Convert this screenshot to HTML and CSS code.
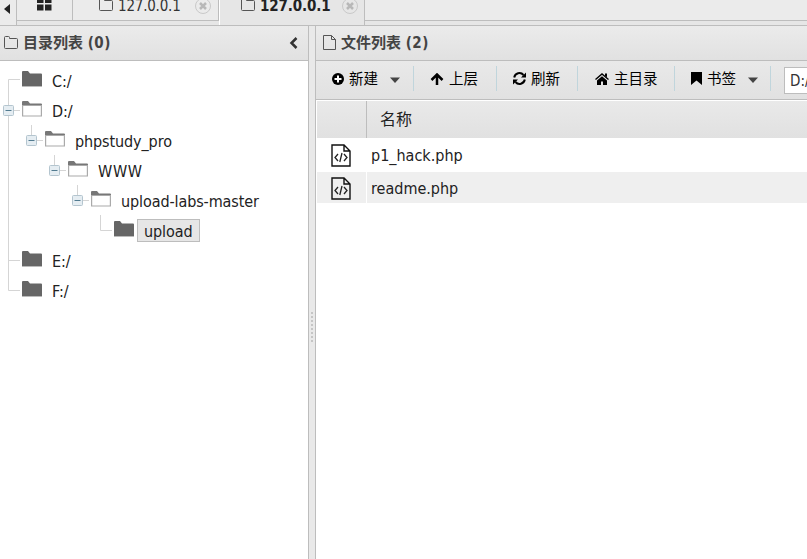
FILE: index.html
```
<!DOCTYPE html>
<html lang="zh">
<head>
<meta charset="utf-8">
<title>127.0.0.1</title>
<link rel="stylesheet" href="styles.css">
</head>
<body>
<svg class="defs" width="0" height="0">
  <symbol id="closed" viewBox="0 0 20 16"><path d="M0 1q0-1 1-1h5l2 2.500h11q1 0 1 1V15H0z" fill="#666"/><path d="M0 15.500h20" stroke="#bbb"/></symbol>
  <symbol id="open" viewBox="0 0 20 16"><path d="M0 4V1q0-1 1-1h5l2 2.500h11q1 0 1 1V4z" fill="#777"/><path d="M.6 4.500h18.800V15H.6z" fill="#fff" stroke="#aaa" stroke-width="1.200"/></symbol>
  <symbol id="folder" viewBox="0 0 14 13"><path d="M.5 1.500q0-1 1-1h3q1 0 1 1v1h7q1 0 1 1v8q0 1-1 1h-11q-1 0-1-1z" fill="none" stroke="#555"/></symbol>
  <symbol id="minus" viewBox="0 0 22 30"><path d="M14 15.500h6" stroke="#d5d5d5"/><rect x="3.500" y="10.500" width="10" height="10" rx="1" fill="#e5edf2" stroke="#b4c5cf"/><path d="M5.500 15.500h6" stroke="#527b90"/></symbol>
  <symbol id="close" viewBox="0 0 18 18"><circle cx="9" cy="9" r="7.500" fill="none" stroke="#c9c9c9"/><path d="m6 6 6 6m0-6-6 6" stroke="#b8b8b8" stroke-width="2.500"/></symbol>
  <symbol id="code" viewBox="0 0 20 23"><path d="M1 1h12l6 6v15H1zM13 1v6h6" fill="none" stroke="#111" stroke-width="1.400"/><path d="m7 10-3 3.500 3 3.500m6-7 3 3.500-3 3.500m-2-8-2.200 9" fill="none" stroke="#222" stroke-width="1.300"/></symbol>
  <symbol id="caret" viewBox="0 0 10 6"><path d="M0 .5h10L5 6z" fill="#444"/></symbol>
</svg>
<div class="tabs">
  <div class="tab scroll"><svg width="6" height="10"><path d="M6 0v10L0 5z" fill="#222"/></svg></div>
  <div class="tab home"><svg width="15" height="14" fill="#222"><path d="M0 0h6.500v6H0zM8 0h6.500v6H8zM0 7.500h6.500v6H0zM8 7.500h6.500v6H8z"/></svg></div>
  <div class="tab t1"><svg class="tf" width="14" height="13"><use href="#folder"/></svg><span class="tl">127.0.0.1</span><svg class="tc" width="18" height="18"><use href="#close"/></svg></div>
  <div class="tab active"><svg class="tf" width="14" height="13"><use href="#folder"/></svg><span class="tl">127.0.0.1</span><svg class="tc" width="18" height="18"><use href="#close"/></svg></div>
  <div class="tab rest"></div>
</div>
<main>
  <section class="left">
    <header><svg width="14" height="13"><use href="#folder"/></svg><b>目录列表 <span class="n">(0)</span></b><svg class="collapse" width="9" height="12"><path d="M7.500 1 2.500 6l5 5" fill="none" stroke="#333" stroke-width="2.500"/></svg></header>
    <div class="tree">
      <div class="row"><svg class="cell"><path d="M8.500 30V14.500H20"/></svg><svg class="ico"><use href="#closed"/></svg><span class="name">C:/</span></div>
      <div class="row"><svg class="cell"><path d="M8.500 0v30"/><use href="#minus"/></svg><svg class="ico"><use href="#open"/></svg><span class="name">D:/</span></div>
      <div class="row"><svg class="ind"><path d="M8.500 0v30"/></svg><svg class="cell"><path d="M8.500 0v15"/><use href="#minus"/></svg><svg class="ico"><use href="#open"/></svg><span class="name">phpstudy_pro</span></div>
      <div class="row"><svg class="ind"><path d="M8.500 0v30"/></svg><i class="ind"></i><svg class="cell"><path d="M8.500 0v15"/><use href="#minus"/></svg><svg class="ico"><use href="#open"/></svg><span class="name wide">WWW</span></div>
      <div class="row"><svg class="ind"><path d="M8.500 0v30"/></svg><i class="ind"></i><i class="ind"></i><svg class="cell"><path d="M8.500 0v15"/><use href="#minus"/></svg><svg class="ico"><use href="#open"/></svg><span class="name">upload-labs-master</span></div>
      <div class="row"><svg class="ind"><path d="M8.500 0v30"/></svg><i class="ind"></i><i class="ind"></i><i class="ind"></i><svg class="cell"><path d="M8.500 0v15.500H20"/></svg><svg class="ico"><use href="#closed"/></svg><span class="name selected">upload</span></div>
      <div class="row"><svg class="cell"><path d="M8.500 0v30M8 15.500h12"/></svg><svg class="ico"><use href="#closed"/></svg><span class="name">E:/</span></div>
      <div class="row"><svg class="cell"><path d="M8.500 0v15.500H20"/></svg><svg class="ico"><use href="#closed"/></svg><span class="name">F:/</span></div>
    </div>
  </section>
  <div class="split"><i></i></div>
  <section class="right">
    <header><svg width="13" height="15"><path d="M.5.5h8l4 4v10H.5zM8.500.5v4h4" fill="none" stroke="#555"/></svg><b>文件列表 <span class="n">(2)</span></b></header>
    <div class="toolbar">
      <div class="btn b1"><svg width="12" height="12"><circle cx="6" cy="6" r="6"/><path d="M6 2.500v7M2.500 6h7" stroke="#fff" stroke-width="2"/></svg><span>新建</span><svg class="caret" width="10" height="6"><use href="#caret"/></svg></div>
      <div class="btn b2"><svg width="14" height="12"><path d="M7 12V2M1.500 7 7 1.500 12.500 7" fill="none" stroke="#000" stroke-width="2.500"/></svg><span>上层</span></div>
      <div class="btn b3"><svg width="13" height="13"><path d="M1.200 5.500A5.300 5.300 0 0 1 10.500 3M11.800 7.500A5.300 5.300 0 0 1 2.500 10" fill="none" stroke="#000" stroke-width="2"/><path d="M13 .5V5.500H8zM0 12.500v-5h5z"/></svg><span>刷新</span></div>
      <div class="btn b4"><svg width="14" height="12"><path d="M7 3.300 2 7.500V12h4V8.500h2V12h4V7.500z"/><path d="m.5 6.500L7 1l6.500 5.500" fill="none" stroke="#000" stroke-width="1.400"/><path d="M10 .5h2v4l-2-2z"/></svg><span>主目录</span></div>
      <div class="btn b5"><svg width="11" height="13"><path d="M0 0h11v13L5.500 8.500 0 13z"/></svg><span>书签</span><svg class="caret" width="10" height="6"><use href="#caret"/></svg></div>
      <div class="path">D:/</div>
    </div>
    <div class="grid">
      <div class="gr gh"><div class="gi"></div><div class="gn">名称</div></div>
      <div class="gr"><div class="gi"><svg width="20" height="23"><use href="#code"/></svg></div><div class="gn">p1_hack.php</div></div>
      <div class="gr alt"><div class="gi"><svg width="20" height="23"><use href="#code"/></svg></div><div class="gn">readme.php</div></div>
    </div>
  </section>
</main>
</body>
</html>
```
FILE: styles.css
```
* { box-sizing: border-box; }
body { margin: 0; width: 807px; height: 559px; overflow: hidden; background: #fff; color: #222;
  font: 16px/30px "DejaVu Sans Condensed", "DejaVu Sans", "Noto Sans CJK SC", sans-serif; font-stretch: condensed; }
svg { display: block; flex: none; }
.defs { position: absolute; }
.tabs { display: flex; height: 26px; background: #e6e6e6; border-bottom: 1px solid #bdbdbd; }
.tab { display: flex; height: 21px; border-right: 1px solid #bdbdbd; border-bottom: 1px solid #bdbdbd; background: #ebebeb; }
.scroll { width: 17px; height: 25px; border-bottom: 0; padding: 4px 0 0 4px; }
.home { width: 56px; padding-left: 20px; }
.home svg { margin-top: -3px; }
.t1 { width: 146px; padding-left: 26px; }
.active { width: 146px; padding-left: 21px; height: 25px; border-left: 1px solid #fff; border-bottom: 0; background: #e6e6e6; font-weight: bold; }
.rest { flex: 1; border-right: 0; }
.tf { margin-top: -2px; }
.tl { width: 64px; margin-left: 5px; line-height: 12px; white-space: nowrap; font-size: 15px; letter-spacing: -.2px; color: #333; }
.t1 .tc { margin: -3px 0 0 12px; }
.active .tl { width: 71px; color: #222; letter-spacing: -.15px; }
.active .tc { margin: -3px 0 0 10px; }
main { display: flex; height: 533px; }
.left { width: 309px; border-right: 1px solid #bdbdbd; }
header { display: flex; align-items: center; height: 35px; padding: 0 10px 2px 4px; background: linear-gradient(#ebebeb, #e1e1e1); border-bottom: 1px solid #bdbdbd; color: #444; font-size: 15px; }
header b { margin: 2px 0 0 5px; line-height: 32px; white-space: nowrap; }
.n { letter-spacing: .5px; }
.collapse { margin: 2px 0 0 auto; }
.tree { padding-top: 4px; }
.row { display: flex; height: 30px; }
.cell { width: 22px; height: 30px; }
.ind { flex: none; width: 23px; height: 30px; }
.cell path, .ind path { fill: none; stroke: #d5d5d5; }
.cell use { stroke: none; }
.ico { width: 20px; height: 16px; margin-top: 6px; }
.name { margin-left: 10px; line-height: 33px; letter-spacing: -.1px; white-space: nowrap; }
.wide { letter-spacing: .7px; }
.selected { width: 63px; height: 23px; margin: 4px 0 0 3px; padding-left: 6px; line-height: 23px; background: #e6e6e6; border: 1px solid #bdbdbd; }
.split { display: flex; align-items: center; justify-content: center; width: 7px; background: #e9e9e9; border-right: 1px solid #bdbdbd; }
.split i { width: 2px; height: 30px; margin-top: 69px; background: repeating-linear-gradient(#c5c5c5 0 2px, #e9e9e9 2px 4px); }
.right { flex: 1; min-width: 0; }
.right header { padding-left: 7px; }
.toolbar { display: flex; align-items: center; height: 39px; padding-bottom: 3px; background: linear-gradient(#e9e9e9, #e1e1e1); border-bottom: 1px solid #bdbdbd; color: #000; font-size: 14.5px; }
.btn { display: flex; align-items: center; flex: none; height: 25px; border-right: 1px solid #c0d5dc; }
.btn span { margin-left: 5px; white-space: nowrap; }
.caret { margin: 2px 0 0 12px; }
.b1 { width: 98px; padding-left: 16px; }
.b2 { width: 83px; padding-left: 16px; }
.b3 { width: 81px; padding-left: 16px; }
.b4 { width: 97px; padding-left: 17px; }
.b5 { width: 96px; padding-left: 16px; }
.path { flex: none; width: 60px; height: 27px; margin: 3px 0 0 13px; padding-left: 5px; line-height: 26px; border: 1px solid #bdbdbd; background: #fff; color: #333; font-size: 15px; }
.grid { padding: 1px 0 0 1px; }
.gr { display: flex; height: 33px; }
.gh { height: 37px; background: linear-gradient(#e9e9e9, #e1e1e1); margin-bottom: 1px; }
.gi { width: 50px; padding: 5px 0 0 14px; border-right: 1px solid #fff; }
.gh .gi { border-color: #bdbdbd; }
.gn { flex: 1; padding-left: 4px; line-height: 34px; letter-spacing: 0; }
.gh .gn { padding-left: 13px; font-size: 16px; line-height: 38px; }
.alt { background: #efefef; height: 31px; }
```
